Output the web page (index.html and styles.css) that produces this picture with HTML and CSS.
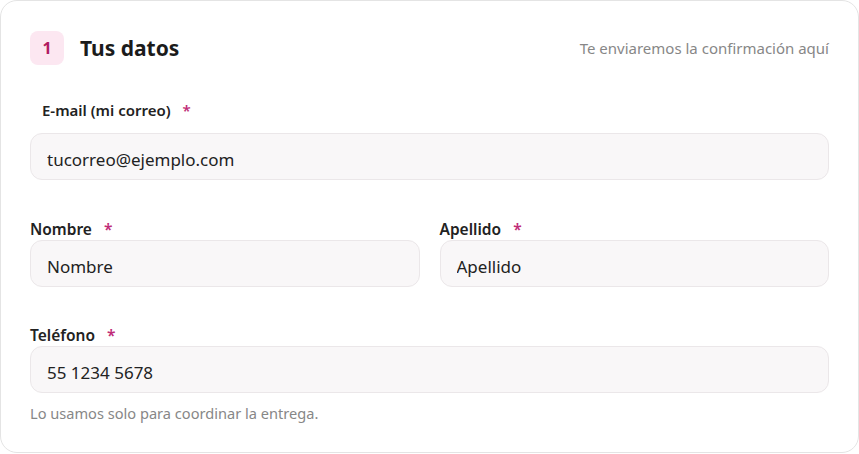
FILE: index.html
```html
<!DOCTYPE html>
<html lang="es">
<head>
    <meta charset="UTF-8">
    <meta name="viewport" content="width=device-width, initial-scale=1.0">
    <title>Tus datos</title>
    <link rel="stylesheet" href="styles.css">
</head>
<body>

    <form class="card">
        <div class="card-header">
            <div class="step">1</div>
            <h2>Tus datos</h2>
            <span class="hint">Te enviaremos la confirmación aquí</span>
        </div>

        <div class="field field-email">
            <label for="email">E-mail (mi correo) <span class="req">*</span></label>
            <input type="email" id="email" value="tucorreo@ejemplo.com">
        </div>

        <div class="row">
            <div class="field">
                <label for="nombre">Nombre <span class="req">*</span></label>
                <input type="text" id="nombre" value="Nombre">
            </div>
            <div class="field">
                <label for="apellido">Apellido <span class="req">*</span></label>
                <input type="text" id="apellido" value="Apellido">
            </div>
        </div>

        <div class="field">
            <label for="telefono">Teléfono <span class="req">*</span></label>
            <input type="tel" id="telefono" value="55 1234 5678">
        </div>
        <p class="help">Lo usamos solo para coordinar la entrega.</p>
    </form>

</body>
</html>
```

FILE: styles.css
```css
body {
    font-family: "Noto Sans", "Open Sans", sans-serif;
    margin: 0;
    background: #fff;
}
.card {
    box-sizing: border-box;
    width: 859px;
    height: 453px;
    border: 1px solid #e4e4e4;
    border-radius: 17px;
    padding: 30px 29px 0 29px;
}
.card-header {
    display: flex;
    align-items: center;
    height: 34px;
}
.step {
    width: 34px;
    height: 34px;
    border-radius: 8px;
    background-color: #fce7f1;
    color: #b01a60;
    font-weight: 700;
    font-size: 16px;
    display: flex;
    align-items: center;
    justify-content: center;
}
.card-header h2 {
    margin: 0 0 0 16px;
    font-size: 21px;
    font-weight: 700;
    color: #1b1b1b;
}
.hint {
    margin-left: auto;
    font-size: 15px;
    color: #878787;
}
.field label {
    display: block;
    font-size: 15.5px;
    font-weight: 600;
    color: #222;
    line-height: 20px;
}
.req {
    color: #c02c77;
    margin-left: 8px;
}
.field input {
    display: block;
    box-sizing: border-box;
    width: 100%;
    height: 47px;
    margin: 1px 0 0;
    padding: 18px 16px 12px;
    border: 1px solid #ebe7e9;
    border-radius: 12px;
    background-color: #f9f7f8;
    font-family: inherit;
    font-size: 17px;
    line-height: 22px;
    color: #222;
    outline: none;
}
.field-email {
    margin-top: 35px;
}
.field-email label {
    padding-left: 12px;
    font-size: 15px;
}
.field-email input {
    margin-top: 13px;
}
.row {
    display: flex;
    gap: 20px;
    margin-top: 39px;
}
.row .field {
    flex: 1;
}
.row + .field {
    margin-top: 38px;
}
.help {
    margin: 10px 0 0;
    font-size: 14.6px;
    line-height: 20px;
    color: #878787;
}
```
